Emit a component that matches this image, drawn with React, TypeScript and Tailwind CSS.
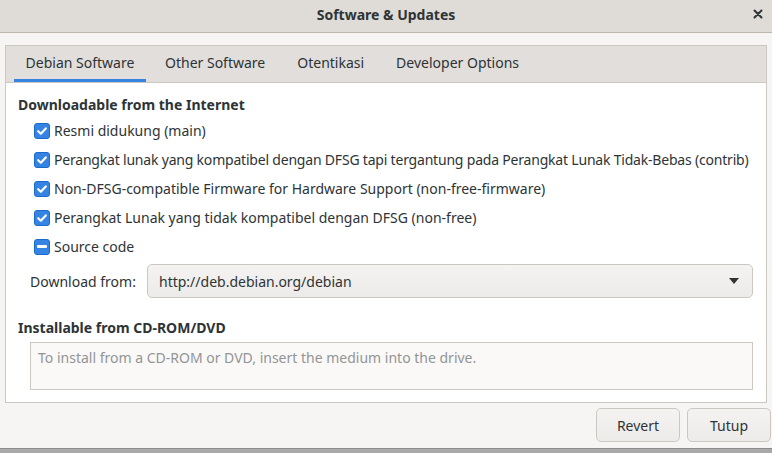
import React from "react";

const Check = ({ mixed = false }: { mixed?: boolean }) => (
  <div className="w-4 h-4 rounded-[3px] bg-[#3584e4] border border-[#1b6acb] flex items-center justify-center shrink-0">
    {mixed ? (
      <div className="w-[10px] h-[3px] rounded-[1px] bg-white" />
    ) : (
      <svg width="12" height="12" viewBox="0 0 12 12">
        <path d="M2.2 6.2 L4.8 8.7 L9.8 3.4" fill="none" stroke="white" strokeWidth="2.2" strokeLinecap="round" strokeLinejoin="round" />
      </svg>
    )}
  </div>
);

const CheckRow = ({ label, mixed, tight }: { label: string; mixed?: boolean; tight?: boolean }) => (
  <div className="h-[29px] flex items-center gap-[4px] pl-[28px] whitespace-nowrap">
    <Check mixed={mixed} />
    <span className={tight ? "tracking-[-0.2px]" : ""}>{label}</span>
  </div>
);

export default function App() {
  const tabs = ["Debian Software", "Other Software", "Otentikasi", "Developer Options"];
  const repos = [
    { label: "Resmi didukung (main)" },
    {
      label: "Perangkat lunak yang kompatibel dengan DFSG tapi tergantung pada Perangkat Lunak Tidak-Bebas (contrib)",
      tight: true,
    },
    { label: "Non-DFSG-compatible Firmware for Hardware Support (non-free-firmware)" },
    { label: "Perangkat Lunak yang tidak kompatibel dengan DFSG (non-free)" },
  ];

  return (
    <div
      className="w-[772px] h-[453px] bg-[#a9a9a9] overflow-hidden text-[#2e3436] text-[14px]"
      style={{ fontFamily: '"Noto Sans", "Open Sans", sans-serif' }}
    >
      <div className="h-[449px] bg-[#f6f5f4] border-b border-[#8c8c8c] flex flex-col">
        {/* title bar */}
        <div className="h-[33px] shrink-0 bg-[#dfdcd8] border-b border-[#bfb8b1] relative flex items-center justify-center pb-[3px]">
          <span className="font-bold text-[14px] text-[#2e3436]">Software &amp; Updates</span>
          <svg className="absolute right-[8px] top-[8px]" width="12" height="12" viewBox="0 0 12 12">
            <path d="M2.5 2.5 L9.5 9.5 M9.5 2.5 L2.5 9.5" stroke="#2e3436" strokeWidth="2" strokeLinecap="round" />
          </svg>
        </div>

        {/* notebook */}
        <div className="mt-[12px] mx-[5px] h-[358px] border border-[#cdc7c2] flex flex-col">
          <div className="h-[37px] shrink-0 bg-[#e1dedb] border-b border-[#cdc7c2] flex pl-[8px]">
            {tabs.map((t, i) => (
              <div
                key={t}
                className={
                  i === 0
                    ? "h-full w-[132px] mr-[3px] flex items-center justify-center border-b-[3px] border-[#3584e4] text-[#2e3436]"
                    : "h-full px-[16px] flex items-center border-b-[3px] border-transparent text-[#2e3436]"
                }
              >
                {t}
              </div>
            ))}
          </div>

          <div className="flex-1 bg-white flex flex-col pt-[11px]">
            <div className="pl-[12px] font-bold h-[20px] flex items-center">Downloadable from the Internet</div>
            <div className="mt-[2px]">
              {repos.map((r) => (
                <CheckRow key={r.label} label={r.label} tight={r.tight} />
              ))}
              <CheckRow label="Source code" mixed />
            </div>

            <div className="flex items-center mt-[3px] pl-[24px] pr-[13px] gap-[14px]">
              <span className="w-[103px] shrink-0 whitespace-nowrap">Download from:</span>
              <div className="flex-1 h-[34px] rounded-[5px] border border-[#cdc7c2] bg-gradient-to-b from-[#f4f3f2] to-[#edebe9] flex items-center justify-between pl-[11px] pr-[12px]">
                <span>http://deb.debian.org/debian</span>
                <svg width="12" height="8" viewBox="0 0 12 8">
                  <path d="M1 1 L11 1 L6 7 Z" fill="#2e3436" />
                </svg>
              </div>
            </div>

            <div className="pl-[12px] font-bold mt-[19px] h-[20px] flex items-center">Installable from CD-ROM/DVD</div>
            <div className="mt-[5px] ml-[24px] mr-[13px] h-[48px] border border-[#cdc7c2] bg-[#faf9f8] px-[7px] pt-[4px] text-[#929595]">
              To install from a CD-ROM or DVD, insert the medium into the drive.
            </div>
          </div>
        </div>

        {/* buttons */}
        <div className="flex justify-end gap-[7px] mt-[5px] pr-[1px]">
          <div className="w-[84px] h-[34px] rounded-[5px] border border-[#cdc7c2] bg-gradient-to-b from-[#f4f3f2] to-[#edebe9] flex items-center justify-center">
            Revert
          </div>
          <div className="w-[84px] h-[34px] rounded-[5px] border border-[#cdc7c2] bg-gradient-to-b from-[#f4f3f2] to-[#edebe9] flex items-center justify-center">
            Tutup
          </div>
        </div>
      </div>
    </div>
  );
}
